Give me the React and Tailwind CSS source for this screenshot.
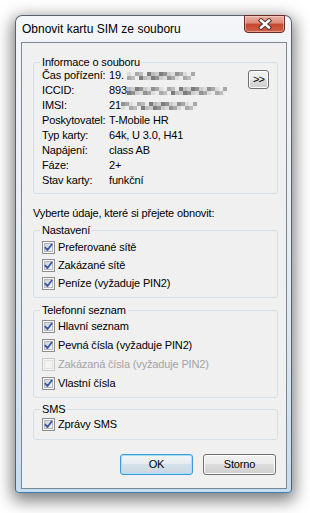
import React from "react";

const shades = [
  "bg-[#ececec]",
  "bg-[#dcdcdc]",
  "bg-[#cccccc]",
  "bg-[#bcbcbc]",
  "bg-[#a8a8a8]",
  "bg-[#929292]",
  "bg-[#7c7c7c]",
];

const Mosaic = ({ cells, seed }) => (
  <span className="flex flex-col">
    {[0, 1].map((row) => (
      <span key={row} className="flex">
        {Array.from({ length: cells }).map((_, i) => (
          <span
            key={i}
            className={`w-[4px] h-[4px] ${shades[(i * 5 + row * 3 + seed + ((i * i) % 4)) % 7]}`}
          />
        ))}
      </span>
    ))}
  </span>
);

const CheckBox = ({ checked, disabled }) => (
  <svg width="13" height="13" viewBox="0 0 13 13" className="shrink-0">
    <defs>
      <linearGradient id="cbIn" x1="0" y1="0" x2="1" y2="1">
        <stop offset="0" stopColor="#c9cdd3" />
        <stop offset="1" stopColor="#f8f8f8" />
      </linearGradient>
    </defs>
    <rect x="0.5" y="0.5" width="12" height="12" fill="#f5f5f5" stroke={disabled ? "#c9c9c9" : "#8e8f8f"} />
    <rect
      x="2.5"
      y="2.5"
      width="8"
      height="8"
      fill={disabled ? "#f3f3f3" : "url(#cbIn)"}
      stroke={disabled ? "#e2e2e2" : "#b5b9bf"}
    />
    {checked && (
      <path
        d="M3.3 6.6 L5.5 9 L9.7 3.5"
        fill="none"
        stroke="#3c5ba5"
        strokeWidth="1.9"
        strokeLinecap="round"
        strokeLinejoin="round"
      />
    )}
  </svg>
);

const Check = ({ label, checked = true, disabled = false, h = "h-[19px]" }) => (
  <div className={`flex items-center gap-[3px] ${h}`}>
    <CheckBox checked={checked} disabled={disabled} />
    <span className={disabled ? "text-[#a3a3a3]" : "text-black"}>{label}</span>
  </div>
);

const Group = ({ title, className = "", children }) => (
  <fieldset className={`border border-[#d5dfe5] rounded-[3px] pl-[8px] pr-[8px] ${className}`}>
    <legend className="ml-[-2px] px-[2px] leading-[13px]">{title}</legend>
    {children}
  </fieldset>
);

const info = [
  ["Čas pořízení:", <span className="flex items-center gap-[3px]">19.<Mosaic cells={17} seed={1} /></span>],
  ["ICCID:", <span className="flex items-center">893<Mosaic cells={25} seed={3} /></span>],
  ["IMSI:", <span className="flex items-center">21<Mosaic cells={19} seed={5} /></span>],
  ["Poskytovatel:", "T-Mobile HR"],
  ["Typ karty:", "64k, U 3.0, H41"],
  ["Napájení:", "class AB"],
  ["Fáze:", "2+"],
  ["Stav karty:", "funkční"],
];

const VistaButton = ({ label, primary }) => (
  <button
    className={`w-[73px] h-[21px] rounded-[3px] border text-[11px] leading-none text-black ${
      primary
        ? "border-[#3c9ad6] shadow-[inset_0_0_0_1px_#a6def8] bg-[linear-gradient(#f1f5f8,#e5ecf1_50%,#d5e1ea_50%,#c9d8e4)]"
        : "border-[#707070] shadow-[inset_0_0_0_1px_#fbfbfb] bg-[linear-gradient(#f2f2f2,#ebebeb_50%,#dddddd_50%,#cfcfcf)]"
    }`}
  >
    {label}
  </button>
);

export default function App() {
  return (
    <div className="w-[310px] h-[513px] bg-white pt-[15px] pl-[15px] font-['Liberation_Sans',Arial,sans-serif] text-[11px] tracking-[-0.15px]">
      <div className="w-[277px] h-[478px] flex flex-col rounded-t-[7px] rounded-b-[4px] border border-[#57626e] border-b-[#3f7fae] bg-linear-to-b from-[#f4f6f9] via-[#e6edf3] to-[#c6ddf0] shadow-[0_5px_16px_3px_rgba(0,0,0,0.5)]">
        {/* title bar */}
        <div className="h-[26px] flex items-start justify-between pl-[6px] pr-[6px]">
          <span className="pt-[6px] text-[12px] leading-[14px] tracking-normal text-black">
            Obnovit kartu SIM ze souboru
          </span>
          <div className="w-[41px] h-[18px] -mt-px rounded-b-[4px] border border-[#6b2a22] bg-[linear-gradient(#eab1a4,#dc8a78_45%,#c8472f_50%,#d0604a)] flex items-center justify-center shadow-[inset_0_0_0_1px_rgba(255,220,210,0.5)]">
            <svg width="16" height="12" viewBox="0 0 16 12">
              <path d="M4 2.5 L12 9.5 M12 2.5 L4 9.5" stroke="#4d3833" strokeWidth="4.4" strokeLinecap="square" />
              <path d="M4 2.5 L12 9.5 M12 2.5 L4 9.5" stroke="#ffffff" strokeWidth="2.4" strokeLinecap="square" />
            </svg>
          </div>
        </div>

        {/* client area */}
        <div className="flex-1 ml-[5px] mr-[4px] mb-[3px] border border-[#7b8894] bg-[#f0f0f0] pl-[11px] pr-[8px] pt-[13px] text-black">
          <Group title="Informace o souboru" className="pb-[5px]">
            <div className="flex justify-between -mt-px">
              <div className="grid grid-cols-[67px_1fr] leading-[15px]">
                {info.map(([k, v]) => (
                  <React.Fragment key={k}>
                    <span>{k}</span>
                    <span className="whitespace-nowrap">{v}</span>
                  </React.Fragment>
                ))}
              </div>
              <button className="mt-[2px] w-[21px] h-[19px] rounded-[3px] border border-[#707070] shadow-[inset_0_0_0_1px_#fbfbfb] bg-[linear-gradient(#f2f2f2,#ebebeb_50%,#dddddd_50%,#cfcfcf)] text-[11px] leading-none tracking-[-1px]">
                &gt;&gt;
              </button>
            </div>
          </Group>

          <div className="mt-[12px] leading-[15px]">Vyberte údaje, které si přejete obnovit:</div>

          <Group title="Nastavení" className="mt-[3px] pb-[5px]">
            <div className="mt-px">
              <Check label="Preferované sítě" h="h-[18px]" />
              <Check label="Zakázané sítě" h="h-[18px]" />
              <Check label="Peníze (vyžaduje PIN2)" h="h-[18px]" />
            </div>
          </Group>

          <Group title="Telefonní seznam" className="mt-[6px] pb-[4px]">
            <Check label="Hlavní seznam" />
            <Check label="Pevná čísla (vyžaduje PIN2)" />
            <Check label="Zakázaná čísla (vyžaduje PIN2)" checked={false} disabled />
            <Check label="Vlastní čísla" />
          </Group>

          <Group title="SMS" className="mt-[5px] pb-[6px]">
            <div className="-mt-px">
              <Check label="Zprávy SMS" h="h-[18px]" />
            </div>
          </Group>

          <div className="mt-[14px] flex justify-end gap-[10px] pr-[2px]">
            <VistaButton label="OK" primary />
            <VistaButton label="Storno" />
          </div>
        </div>
      </div>
    </div>
  );
}
